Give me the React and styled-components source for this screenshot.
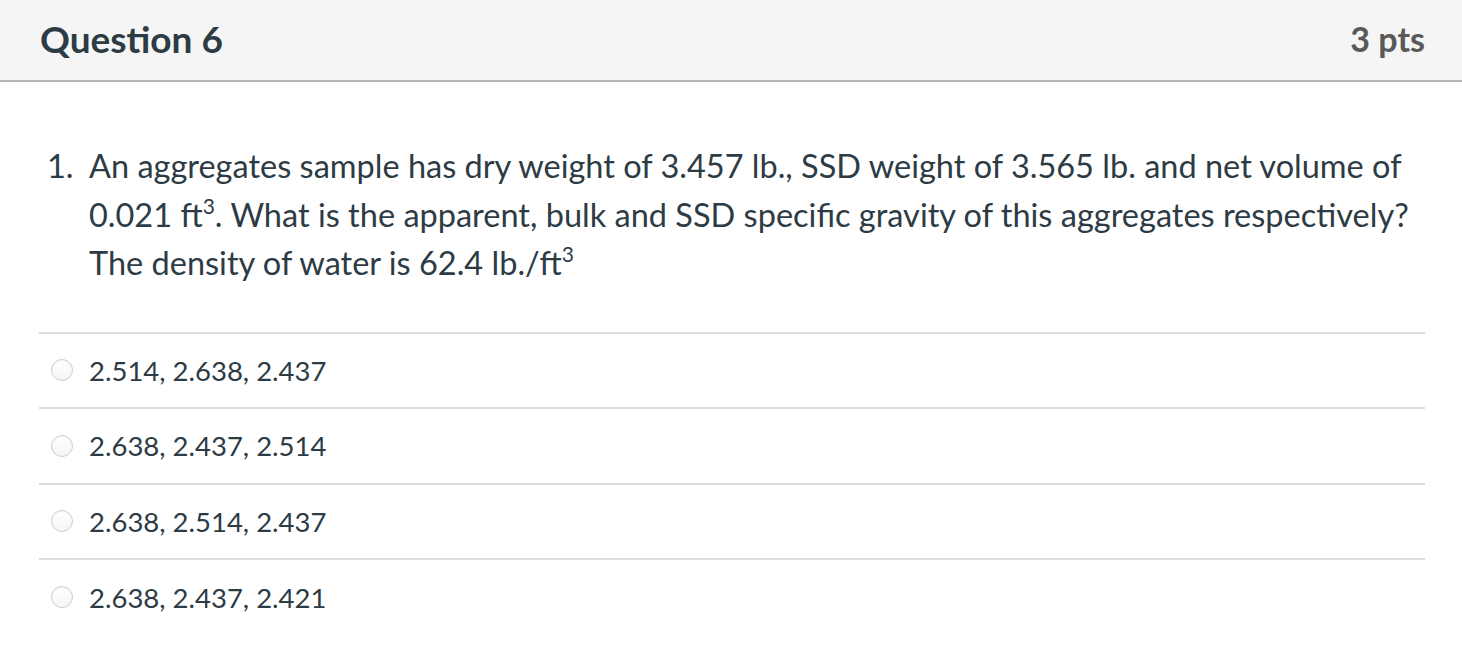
import React from "react";
import styled, {createGlobalStyle} from "styled-components";

const GlobalStyle = createGlobalStyle`
  body {
    margin: 0;
    background: #fff;
    font-family: Lato, "Open Sans", sans-serif;
    color: #2d3b45;
  }
`

const answers = [
  "2.514, 2.638, 2.437",
  "2.638, 2.437, 2.514",
  "2.638, 2.514, 2.437",
  "2.638, 2.437, 2.421",
]

const App = () => {
  return (
    <>
      <GlobalStyle/>
      <StQuestion>
        <StHeader>
          <StTitle>Question 6</StTitle>
          <StPoints>3 pts</StPoints>
        </StHeader>
        <StBody>
          <StItem>
            <StNumber>1.</StNumber>
            <StText>
              An aggregates sample has dry weight of 3.457 lb., SSD weight of 3.565 lb. and net volume of
              0.021 ft<sup>3</sup>. What is the apparent, bulk and SSD specific gravity of this aggregates respectively?
              The density of water is 62.4 lb./ft<sup>3</sup>
            </StText>
          </StItem>
          <StAnswers>
            {answers.map((text, i) => (
              <StAnswer key={i}>
                <StRadio type="radio" name="q6"/>
                <StLabel>{text}</StLabel>
              </StAnswer>
            ))}
          </StAnswers>
        </StBody>
      </StQuestion>
    </>
  )
}

const StQuestion = styled.div`
  width: 100%;
`

const StHeader = styled.div`
  display: flex;
  align-items: center;
  justify-content: space-between;
  box-sizing: border-box;
  height: 82px;
  padding: 0 37px 4px 40px;
  background-color: #f5f5f5;
  border-bottom: 2px solid #b5b5b5;
`

const StTitle = styled.h2`
  margin: 0;
  font-size: 37px;
  font-weight: 700;
  color: #2d3b45;
`

const StPoints = styled.div`
  font-size: 34px;
  font-weight: 700;
  color: #595959;
`

const StBody = styled.div`
  padding: 0 37px 0 39px;
`

const StItem = styled.div`
  display: flex;
  padding: 60px 0 44px 8px;
  font-size: 32.5px;
  line-height: 48.5px;

  sup {
    font-size: 21px;
    line-height: 0;
    vertical-align: 13px;
  }
`

const StNumber = styled.span`
  flex: 0 0 42px;
`

const StText = styled.p`
  margin: 0;
  flex: 1;
`

const StAnswers = styled.div`
  display: flex;
  flex-direction: column;
`

const StAnswer = styled.label`
  display: flex;
  align-items: center;
  gap: 16px;
  height: 73.6px;
  padding-left: 12px;
  border-top: 2px solid #dcdcdc;
`

const StRadio = styled.input`
  appearance: none;
  margin: 0;
  width: 22px;
  height: 22px;
  border-radius: 50%;
  border: 1px solid #cdcdcd;
  background: linear-gradient(#ffffff, #f5f5f5);
  box-shadow: inset 0 1px 1px rgba(0, 0, 0, 0.04);
`

const StLabel = styled.span`
  font-size: 27.5px;
  color: #2d3b45;
`

export default App
